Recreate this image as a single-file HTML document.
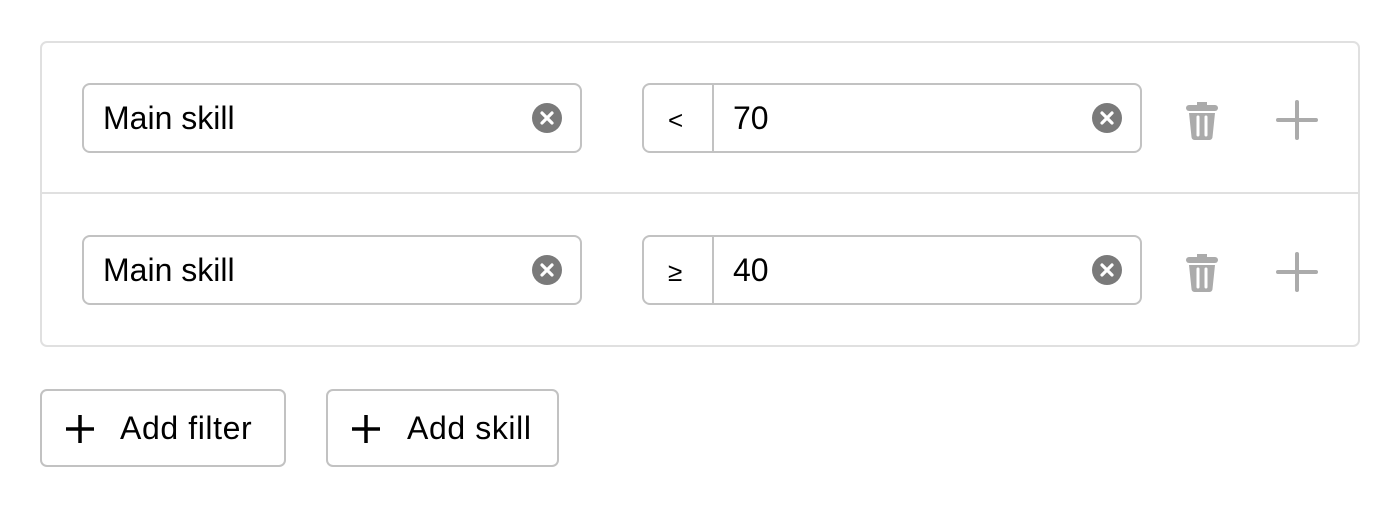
<!DOCTYPE html>
<html><head><style>
body{margin:0;width:1400px;height:508px;background:#fff;font-family:"Liberation Sans",sans-serif;position:relative;overflow:hidden}
.box{position:absolute;left:40px;top:41px;width:1316px;height:302px;border:2px solid #e0e0e0;border-radius:7px}
.div{position:absolute;left:42px;top:192px;width:1316px;height:2px;background:#e0e0e0}
.in{position:absolute;height:66px;border:2px solid #c2c2c2;border-radius:8px;box-sizing:content-box}
.t{position:absolute;font-size:32px;color:#000;line-height:32px}
.clr{position:absolute;width:30px;height:30px}
.btn{position:absolute;top:389px;height:74px;border:2px solid #c2c2c2;border-radius:7px}
</style></head><body>
<div class="box"></div><div class="div"></div>

<div class="in" style="left:82px;top:83px;width:496px"></div>
<div class="t" style="left:103px;top:102px">Main skill</div>
<svg class="clr" style="left:532px;top:103px" viewBox="0 0 30 30"><circle cx="15" cy="15" r="15" fill="#7a7a7a"/><path d="M10 10L20 20M20 10L10 20" stroke="#fff" stroke-width="3.2" stroke-linecap="round"/></svg>
<div class="in" style="left:642px;top:83px;width:496px"></div>
<div style="position:absolute;left:712px;top:85px;width:2px;height:66px;background:#c2c2c2"></div>
<div class="t" style="left:668px;top:104px;font-size:26px">&lt;</div>
<div class="t" style="left:733px;top:102px">70</div>
<svg class="clr" style="left:1092px;top:103px" viewBox="0 0 30 30"><circle cx="15" cy="15" r="15" fill="#7a7a7a"/><path d="M10 10L20 20M20 10L10 20" stroke="#fff" stroke-width="3.2" stroke-linecap="round"/></svg>
<svg style="position:absolute;left:1185px;top:100px" width="34" height="40" viewBox="0 0 34 40"><path d="M12 2h10v4h-10z" fill="#ababab"/><rect x="1" y="5" width="32" height="6" rx="3" fill="#ababab"/><path d="M4 13h26l-2.5 24a3 3 0 0 1-3 3h-15a3 3 0 0 1-3-3z" fill="#ababab"/><path d="M13 17v18M21 17v18" stroke="#fff" stroke-width="3" stroke-linecap="round"/></svg>
<svg style="position:absolute;left:1276px;top:100px" width="42" height="40" viewBox="0 0 42 40"><path d="M21 2v36M2 20h38" stroke="#ababab" stroke-width="4" stroke-linecap="round"/></svg>

<div class="in" style="left:82px;top:235px;width:496px"></div>
<div class="t" style="left:103px;top:254px">Main skill</div>
<svg class="clr" style="left:532px;top:255px" viewBox="0 0 30 30"><circle cx="15" cy="15" r="15" fill="#7a7a7a"/><path d="M10 10L20 20M20 10L10 20" stroke="#fff" stroke-width="3.2" stroke-linecap="round"/></svg>
<div class="in" style="left:642px;top:235px;width:496px"></div>
<div style="position:absolute;left:712px;top:237px;width:2px;height:66px;background:#c2c2c2"></div>
<div class="t" style="left:668px;top:256px;font-size:26px">≥</div>
<div class="t" style="left:733px;top:254px">40</div>
<svg class="clr" style="left:1092px;top:255px" viewBox="0 0 30 30"><circle cx="15" cy="15" r="15" fill="#7a7a7a"/><path d="M10 10L20 20M20 10L10 20" stroke="#fff" stroke-width="3.2" stroke-linecap="round"/></svg>
<svg style="position:absolute;left:1185px;top:252px" width="34" height="40" viewBox="0 0 34 40"><path d="M12 2h10v4h-10z" fill="#ababab"/><rect x="1" y="5" width="32" height="6" rx="3" fill="#ababab"/><path d="M4 13h26l-2.5 24a3 3 0 0 1-3 3h-15a3 3 0 0 1-3-3z" fill="#ababab"/><path d="M13 17v18M21 17v18" stroke="#fff" stroke-width="3" stroke-linecap="round"/></svg>
<svg style="position:absolute;left:1276px;top:252px" width="42" height="40" viewBox="0 0 42 40"><path d="M21 2v36M2 20h38" stroke="#ababab" stroke-width="4" stroke-linecap="round"/></svg>

<div class="btn" style="left:40px;width:242px"></div>
<svg style="position:absolute;left:64px;top:413px" width="32" height="32" viewBox="0 0 32 32"><path d="M16 2v28M2 16h28" stroke="#000" stroke-width="3.5"/></svg>
<div class="t" style="left:120px;top:412px;letter-spacing:0.6px">Add filter</div>
<div class="btn" style="left:326px;width:229px"></div>
<svg style="position:absolute;left:350px;top:413px" width="32" height="32" viewBox="0 0 32 32"><path d="M16 2v28M2 16h28" stroke="#000" stroke-width="3.5"/></svg>
<div class="t" style="left:407px;top:412px;letter-spacing:0.6px">Add skill</div>
</body></html>
